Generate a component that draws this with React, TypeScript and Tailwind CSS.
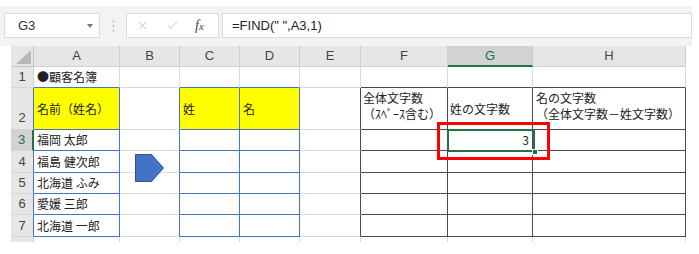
import { X, Check } from 'lucide-react';

type T = 'b' | 'd' | null;

const COLS = ['A', 'B', 'C', 'D', 'E', 'F', 'G', 'H'];

// border colours: gridline, blue table, dark table
const RIGHT = { g: 'border-r-[#dadada]', b: 'border-r-[#4472c4]', d: 'border-r-[#4a4a4a]' };
const BOTTOM = { g: 'border-b-[#dadada]', b: 'border-b-[#4472c4]', d: 'border-b-[#4a4a4a]' };

const tbl = (r: number, c: number): T => {
    if (r < 2 || r > 7) return null;
    if (c === 0 || c === 2 || c === 3) return 'b';
    if (c >= 5 && c <= 7) return 'd';
    return null;
};

const names: Record<number, string> = {
    1: '●顧客名簿',
    3: '福岡 太郎',
    4: '福島 健次郎',
    5: '北海道 ふみ',
    6: '愛媛 三郎',
    7: '北海道 一郎',
};

function cellContent(r: number, c: number) {
    if (c === 0 && names[r]) return <span className="pl-[3px] self-center whitespace-nowrap">{names[r]}</span>;
    if (r === 2) {
        if (c === 0) return <span className="pl-[3px] self-center whitespace-nowrap">名前（姓名）</span>;
        if (c === 2) return <span className="pl-[3px] self-center">姓</span>;
        if (c === 3) return <span className="pl-[3px] self-center">名</span>;
        if (c === 5)
            return (
                <div className="pl-[2px] pt-[2px] leading-[16px] whitespace-nowrap">
                    <div>全体文字数</div>
                    <div>（ｽﾍﾟｰｽ含む）</div>
                </div>
            );
        if (c === 6) return <span className="pl-[2px] self-center whitespace-nowrap">姓の文字数</span>;
        if (c === 7)
            return (
                <div className="pl-[3px] pt-[2px] leading-[16px] whitespace-nowrap">
                    <div>名の文字数</div>
                    <div>（全体文字数－姓文字数）</div>
                </div>
            );
    }
    if (r === 3 && c === 6) return <span className="ml-auto pr-[3px] self-center">3</span>;
    return null;
}

export default function App() {
    const rows = [1, 2, 3, 4, 5, 6, 7, 8];

    return (
        <div className="relative w-[699px] h-[254px] bg-white overflow-hidden text-[12px] text-[#222] font-['Noto_Sans_CJK_JP',sans-serif]">
            {/* formula bar */}
            <div className="mt-[6px] w-[692px] h-[40px] bg-[#f3f3f3] flex items-start pt-[7px] pl-[4px]">
                <div className="w-[96px] h-[25px] bg-white border border-[#dcdcdc] flex items-center pl-[13px] pr-[6px] font-['Liberation_Sans',sans-serif] text-[13px] text-[#333]">
                    <span>G3</span>
                    <svg className="ml-auto" width="6" height="4" viewBox="0 0 6 4">
                        <path d="M0 0h6L3 4z" fill="#777" />
                    </svg>
                </div>
                <div className="w-[26px] h-[25px] flex items-center justify-center">
                    <svg width="3" height="12" viewBox="0 0 3 12">
                        <circle cx="1.5" cy="1.5" r="1" fill="#bbb" />
                        <circle cx="1.5" cy="6" r="1" fill="#bbb" />
                        <circle cx="1.5" cy="10.5" r="1" fill="#bbb" />
                    </svg>
                </div>
                <div className="w-[93px] h-[25px] bg-white border border-[#dcdcdc] flex items-center">
                    <X className="ml-[9px]" size={13} strokeWidth={1.2} color="#a8a8a8" />
                    <Check className="ml-[17px]" size={13} strokeWidth={1.2} color="#a8a8a8" />
                    <span className="ml-[16px] font-['Liberation_Serif',serif] italic text-[14px] text-[#444]">
                        f<span className="text-[11px]">x</span>
                    </span>
                </div>
                <div className="ml-[3px] w-[470px] h-[25px] bg-white border border-[#dcdcdc] flex items-center pl-[9px] font-['Liberation_Sans',sans-serif] text-[13px] text-[#222]">
                    =FIND(" ",A3,1)
                </div>
            </div>

            {/* sheet */}
            <div className="ml-[11px] grid grid-cols-[23px_86px_60px_60px_60px_61px_87px_85px_153px] grid-rows-[21px_21px_42px_21px_22px_21px_21px_22px_5px]">
                {/* header row */}
                <div className="bg-[#e6e6e6] border-r border-b border-[#c8c8c8] flex items-end justify-end p-[2px]">
                    <svg width="15" height="14" viewBox="0 0 15 14">
                        <path d="M15 0V14H0z" fill="#b8b8b8" />
                    </svg>
                </div>
                {COLS.map((l) =>
                    l === 'G' ? (
                        <div
                            key={l}
                            className="bg-[#d2d2d2] border-r border-[#c8c8c8] border-b-2 border-b-[#217346] flex items-center justify-center text-[#217346] font-['Liberation_Sans',sans-serif] text-[13px]"
                        >
                            {l}
                        </div>
                    ) : (
                        <div
                            key={l}
                            className="bg-[#e6e6e6] border-r border-b border-[#cfcfcf] flex items-center justify-center text-[#444] font-['Liberation_Sans',sans-serif] text-[13px]"
                        >
                            {l}
                        </div>
                    )
                )}

                {rows.map((r) => (
                    <Row key={r} r={r} />
                ))}
            </div>

            {/* shape: pentagon arrow */}
            <svg className="absolute left-[135px] top-[154px]" width="30" height="30" viewBox="0 0 30 30">
                <path d="M0.5 0.5H16.5L28.5 14L16.5 27.5H0.5Z" fill="#4472c4" stroke="#2f528f" strokeWidth="1" />
            </svg>

            {/* active cell G3 */}
            <div className="absolute left-[447px] top-[129px] w-[88px] h-[23px] border-2 border-[#217346]" />
            <div className="absolute left-[532px] top-[149px] w-[6px] h-[6px] bg-[#217346] border border-white" />

            {/* red callout */}
            <div className="absolute left-[437px] top-[122px] w-[113px] h-[38px] border-[3px] border-[#ff0000]" />
        </div>
    );
}

function Row({ r }: { r: number }) {
    const selected = r === 3;
    const headCls = selected
        ? 'bg-[#d2d2d2] text-[#217346] border-r-2 border-r-[#217346]'
        : r >= 2 && r <= 7
          ? 'bg-[#e6e6e6] text-[#444] border-r border-r-[#4472c4]'
          : 'bg-[#e6e6e6] text-[#444] border-r border-r-[#cfcfcf]';
    const headAlign = r === 2 ? 'items-end pb-[2px]' : 'items-center';

    return (
        <>
            <div className={`${headCls} ${headAlign} ${r === 8 ? '' : 'border-b border-b-[#d6d6d6]'} flex justify-center font-['Liberation_Sans',sans-serif] text-[13px]`}>
                {r === 8 ? null : r}
            </div>
            {COLS.map((_, c) => {
                const rt = RIGHT[tbl(r, c) || tbl(r, c + 1) || 'g'];
                const bt = r === 8 ? '' : `border-b ${BOTTOM[tbl(r, c) || tbl(r + 1, c) || 'g']}`;
                const yellow = r === 2 && (c === 0 || c === 2 || c === 3);
                return (
                    <div key={c} className={`flex overflow-visible border-r ${rt} ${bt} ${yellow ? 'bg-[#ffff00]' : 'bg-white'}`}>
                        {cellContent(r, c)}
                    </div>
                );
            })}
        </>
    );
}
